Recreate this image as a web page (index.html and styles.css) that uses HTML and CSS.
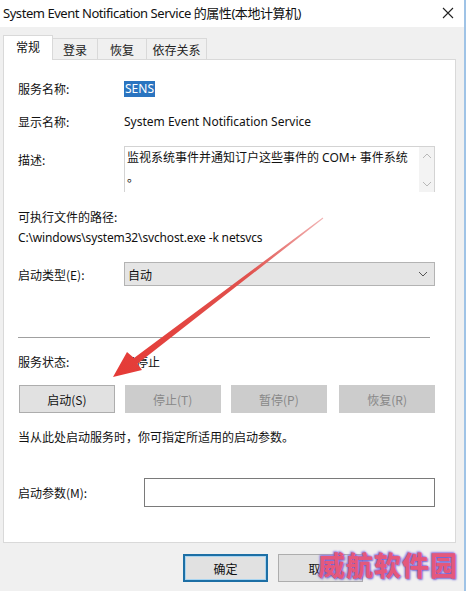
FILE: index.html
```html
<!DOCTYPE html>
<html>
<head>
<meta charset="utf-8">
<link rel="stylesheet" href="styles.css">
</head>
<body>
<div class="window">
  <div class="titlebar">
    <span class="title">System Event Notification Service 的属性(本地计算机)</span>
    <svg class="close" width="12" height="12" viewBox="0 0 12 12"><path d="M1 1L11 11M11 1L1 11" stroke="#222" stroke-width="1.1" fill="none"/></svg>
  </div>
  <div class="body">
    <div class="tabs">
      <div class="tab active">常规</div>
      <div class="tab t2">登录</div>
      <div class="tab t3">恢复</div>
      <div class="tab t4">依存关系</div>
    </div>
    <div class="panel">
      <div class="row r1"><span class="label">服务名称:</span><span class="value"><span class="sel">SENS</span></span></div>
      <div class="row r2"><span class="label">显示名称:</span><span class="value">System Event Notification Service</span></div>
      <div class="row r3">
        <span class="label desc-label">描述:</span>
        <div class="textarea">
          <div class="ta-text">监视系统事件并通知订户这些事件的 COM+ 事件系统<br>。</div>
          <div class="scroll">
            <svg width="10" height="6" viewBox="0 0 10 6"><path d="M1 5L5 1L9 5" stroke="#b8b8b8" fill="none"/></svg>
            <svg width="10" height="6" viewBox="0 0 10 6"><path d="M1 1L5 5L9 1" stroke="#b8b8b8" fill="none"/></svg>
          </div>
        </div>
      </div>
      <div class="line r4">可执行文件的路径:</div>
      <div class="line r5">C:\windows\system32\svchost.exe -k netsvcs</div>
      <div class="row r6">
        <span class="label">启动类型(E):</span>
        <div class="select"><span>自动</span><svg width="10" height="6" viewBox="0 0 10 6"><path d="M1 1L5 5L9 1" stroke="#555" fill="none"/></svg></div>
      </div>
      <div class="sep"></div>
      <div class="row r7"><span class="label">服务状态:</span><span class="value">已停止</span></div>
      <div class="buttons">
        <div class="btn">启动(S)</div>
        <div class="btn dis">停止(T)</div>
        <div class="btn dis wide">暂停(P)</div>
        <div class="btn dis">恢复(R)</div>
      </div>
      <div class="line r8">当从此处启动服务时，你可指定所适用的启动参数。</div>
      <div class="row r9">
        <span class="label plabel">启动参数(M):</span>
        <div class="input"></div>
      </div>
    </div>
    <div class="footer">
      <div class="fbtn ok">确定</div>
      <div class="fbtn">取消</div>
    </div>
  </div>
  <svg class="arrow" width="466" height="591" viewBox="0 0 466 591">
    <defs>
      <linearGradient id="ag" x1="323" y1="218" x2="113" y2="378" gradientUnits="userSpaceOnUse">
        <stop offset="0" stop-color="#f2b4b4"/>
        <stop offset="0.35" stop-color="#e0524e"/>
        <stop offset="1" stop-color="#e53a36"/>
      </linearGradient>
    </defs>
    <polygon points="322.7,217.6 134,358 127,352 113,377 142,370 137.5,363.8 323.3,218.4" fill="url(#ag)"/>
  </svg>
  <div class="watermark">威航软件园</div>
</div>
</body>
</html>
```
FILE: styles.css
```css
* { box-sizing: border-box; }
html, body { margin: 0; padding: 0; }
body {
  width: 466px;
  height: 591px;
  overflow: hidden;
  font-family: "Noto Sans", "Noto Sans CJK SC", sans-serif;
  font-size: 12px;
  color: #111;
  background: #f0f0f0;
}
.window {
  position: relative;
  width: 466px;
  height: 591px;
  background: #f0f0f0;
  border-right: 2px solid #9fc3e6;
}
.titlebar {
  height: 27px;
  background: #fff;
  display: flex;
  align-items: center;
  justify-content: space-between;
  padding: 0 10px 2px 3px;
}
.title {
  font-size: 13px;
  font-family: "Noto Sans", "Noto Sans CJK SC", sans-serif;
  letter-spacing: -0.45px;
  color: #111;
}
.close { margin-top: 1px; }
.body {
  padding: 8px 8px 0 3px;
}
.tabs {
  display: flex;
  align-items: flex-end;
  height: 24px;
}
.tab {
  height: 21px;
  border: 1px solid #d9d9d9;
  border-bottom: none;
  border-left: none;
  background: #f0f0f0;
  font-family: "Noto Sans CJK SC", sans-serif;
  font-size: 12px;
  color: #222;
  display: flex;
  align-items: center;
  justify-content: center;
}
.tab.active {
  height: 25px;
  width: 50px;
  background: #fff;
  border: 1px solid #d9d9d9;
  border-bottom: none;
  margin-bottom: -1px;
  position: relative;
  z-index: 1;
  padding-bottom: 3px;
  color: #111;
}
.t2 { width: 45px; }
.t3 { width: 49px; }
.t4 { width: 60px; }
.panel {
  background: #fff;
  border: 1px solid #d9d9d9;
  height: 484px;
  padding: 18px 20px 0 14px;
}
.row {
  display: flex;
  align-items: center;
}
.label {
  width: 106px;
  flex: none;
  font-family: "Noto Sans CJK SC", sans-serif;
}
.value { font-family: "Noto Sans", "Noto Sans CJK SC", sans-serif; }
.r1 { height: 20px; }
.sel {
  background: #2a74c0;
  color: #fff;
  padding: 0 1px;
  display: inline-block;
  line-height: 16px;
}
.r2 { height: 20px; margin-top: 13px; }
.r3 { margin-top: 15px; align-items: flex-start; }
.desc-label { margin-top: 4px; line-height: 20px; }
.textarea {
  flex: 1;
  height: 46px;
  border: 1px solid #d3d3d3;
  border-bottom: none;
  display: flex;
}
.ta-text {
  flex: 1;
  padding: 1px 2px;
  line-height: 20px;
  font-family: "Noto Sans", "Noto Sans CJK SC", sans-serif;
}
.scroll {
  width: 15px;
  background: #f3f3f3;
  display: flex;
  flex-direction: column;
  justify-content: space-between;
  align-items: center;
  padding: 6px 0 5px;
}
.line { height: 20px; line-height: 20px; }
.r4 { margin-top: 15px; font-family: "Noto Sans CJK SC", sans-serif; }
.r5 { margin-top: 1px; letter-spacing: -0.15px; }
.r6 { margin-top: 14px; }
.select {
  flex: 1;
  height: 24px;
  background: #e5e5e5;
  border: 1px solid #b3b3b3;
  display: flex;
  align-items: center;
  justify-content: space-between;
  padding: 0 6px 0 3px;
  font-family: "Noto Sans CJK SC", sans-serif;
}
.sep {
  height: 1px;
  background: #a0a0a0;
  margin: 51px 5px 0 0;
}
.r7 { height: 20px; margin-top: 13px; }
.r7 .value { font-family: "Noto Sans CJK SC", sans-serif; }
.buttons {
  display: flex;
  margin-top: 14px;
  margin-left: 1px;
  gap: 10px;
}
.btn {
  width: 96px;
  height: 28px;
  border: 1px solid #adadad;
  background: #e1e1e1;
  display: flex;
  align-items: center;
  justify-content: center;
  font-family: "Noto Sans CJK SC", sans-serif;
}
.btn.dis {
  border-color: #cccccc;
  background: #cccccc;
  color: #888;
}
.btn.wide { width: 97px; margin-right: 2px; }
.r8 { margin-top: 14px; font-family: "Noto Sans CJK SC", sans-serif; }
.r9 { margin-top: 31px; }
.plabel { width: 126px; }
.input {
  flex: 1;
  height: 29px;
  border: 1px solid #7a7a7a;
  background: #fff;
}
.footer {
  display: flex;
  padding: 11px 0 0 180px;
  gap: 10px;
}
.fbtn {
  width: 85px;
  height: 28px;
  border: 1px solid #adadad;
  background: #e1e1e1;
  display: flex;
  align-items: center;
  justify-content: center;
  font-family: "Noto Sans CJK SC", sans-serif;
}
.fbtn.ok {
  border: 2px solid #1d6fa5;
  box-shadow: inset 0 0 0 1px #a8d4f0;
}
.arrow {
  position: absolute;
  left: 0;
  top: 0;
  pointer-events: none;
}
.watermark {
  position: absolute;
  left: 318px;
  top: 549px;
  font-family: "Noto Sans CJK SC", sans-serif;
  font-weight: 900;
  font-size: 27px;
  letter-spacing: 1px;
  color: #e4587c;
  text-shadow: 1px 1px 2px #6a5fd0, -1px -1px 2px #8a6fe0;
  line-height: 32px;
}
```
